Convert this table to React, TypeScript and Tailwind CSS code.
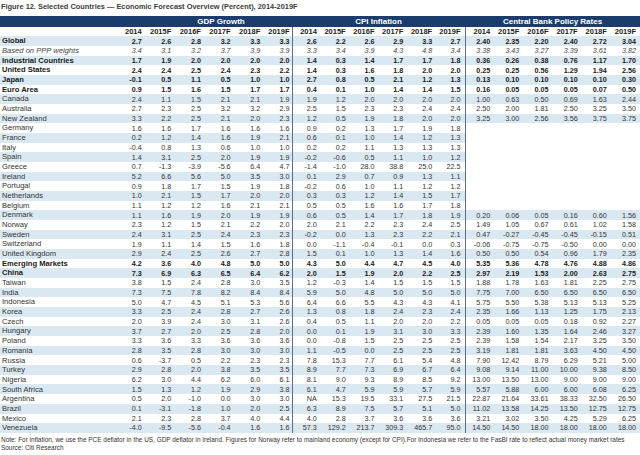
type Row = {
  name: string;
  kind?: "bold" | "italic";
  gdp: string[];
  cpi: string[];
  cb?: string[];
};

const years = ["2014", "2015F", "2016F", "2017F", "2018F", "2019F"];

const rows: Row[] = [
  { name: "Global", kind: "bold", gdp: ["2.7", "2.6", "2.8", "3.2", "3.3", "3.3"], cpi: ["2.6", "2.2", "2.6", "2.9", "3.3", "2.7"], cb: ["2.40", "2.35", "2.20", "2.40", "2.72", "3.04"] },
  { name: "Based on PPP weights", kind: "italic", gdp: ["3.4", "3.1", "3.2", "3.7", "3.9", "3.9"], cpi: ["3.3", "3.4", "3.9", "4.3", "4.8", "3.4"], cb: ["3.38", "3.43", "3.27", "3.39", "3.61", "3.82"] },
  { name: "Industrial Countries", kind: "bold", gdp: ["1.7", "1.9", "2.0", "2.0", "2.0", "2.0"], cpi: ["1.4", "0.3", "1.4", "1.7", "1.7", "1.8"], cb: ["0.36", "0.26", "0.38", "0.76", "1.17", "1.70"] },
  { name: "United States", kind: "bold", gdp: ["2.4", "2.4", "2.5", "2.4", "2.3", "2.2"], cpi: ["1.4", "0.3", "1.6", "1.8", "2.0", "2.0"], cb: ["0.25", "0.25", "0.56", "1.29", "1.94", "2.56"] },
  { name: "Japan", kind: "bold", gdp: ["-0.1", "0.5", "1.1", "0.5", "1.0", "1.0"], cpi: ["2.7", "0.8", "0.5", "2.1", "1.2", "1.3"], cb: ["0.13", "0.10", "0.10", "0.10", "0.10", "0.30"] },
  { name: "Euro Area", kind: "bold", gdp: ["0.9", "1.5", "1.6", "1.5", "1.7", "1.7"], cpi: ["0.4", "0.1", "1.0", "1.4", "1.4", "1.5"], cb: ["0.16", "0.05", "0.05", "0.05", "0.07", "0.50"] },
  { name: "Canada", gdp: ["2.4", "1.1", "1.5", "2.1", "2.1", "1.9"], cpi: ["1.9", "1.2", "2.0", "2.0", "2.0", "2.0"], cb: ["1.00", "0.63", "0.50", "0.69", "1.63", "2.44"] },
  { name: "Australia", gdp: ["2.7", "2.3", "2.5", "3.2", "3.2", "2.9"], cpi: ["2.5", "1.5", "2.3", "2.3", "2.4", "2.4"], cb: ["2.50", "2.00", "1.81", "2.50", "3.25", "3.50"] },
  { name: "New Zealand", gdp: ["3.3", "2.2", "2.5", "2.1", "2.0", "2.3"], cpi: ["1.2", "0.5", "1.9", "1.8", "2.0", "2.0"], cb: ["3.25", "3.00", "2.56", "3.56", "3.75", "3.75"] },
  { name: "Germany", gdp: ["1.6", "1.6", "1.7", "1.6", "1.6", "1.6"], cpi: ["0.9", "0.2", "1.3", "1.7", "1.9", "1.8"] },
  { name: "France", gdp: ["0.2", "1.2", "1.4", "1.6", "1.9", "2.1"], cpi: ["0.6", "0.1", "1.0", "1.4", "1.2", "1.3"] },
  { name: "Italy", gdp: ["-0.4", "0.8", "1.3", "0.6", "1.0", "1.0"], cpi: ["0.2", "0.2", "1.1", "1.3", "1.3", "1.3"] },
  { name: "Spain", gdp: ["1.4", "3.1", "2.5", "2.0", "1.9", "1.9"], cpi: ["-0.2", "-0.6", "0.5", "1.1", "1.0", "1.2"] },
  { name: "Greece", gdp: ["0.7", "-1.3", "-3.9", "-5.6", "6.4", "4.7"], cpi: ["-1.4", "-1.0", "28.0", "38.8", "25.0", "22.5"] },
  { name: "Ireland", gdp: ["5.2", "6.6", "5.6", "5.0", "3.5", "3.0"], cpi: ["0.1", "2.9", "0.7", "0.9", "1.3", "1.1"] },
  { name: "Portugal", gdp: ["0.9", "1.8", "1.7", "1.5", "1.9", "1.8"], cpi: ["-0.2", "0.6", "1.0", "1.1", "1.2", "1.2"] },
  { name: "Netherlands", gdp: ["1.0", "2.1", "1.5", "1.7", "2.0", "2.0"], cpi: ["0.3", "0.3", "1.2", "1.4", "1.5", "1.7"] },
  { name: "Belgium", gdp: ["1.1", "1.2", "1.2", "1.6", "2.1", "2.1"], cpi: ["0.5", "0.5", "1.6", "1.6", "1.7", "1.8"] },
  { name: "Denmark", gdp: ["1.1", "1.6", "1.9", "2.0", "1.9", "1.9"], cpi: ["0.6", "0.5", "1.4", "1.7", "1.8", "1.9"], cb: ["0.20", "0.06", "0.05", "0.16", "0.60", "1.56"] },
  { name: "Norway", gdp: ["2.3", "1.2", "1.5", "2.1", "2.2", "2.0"], cpi: ["2.0", "2.1", "2.2", "2.3", "2.4", "2.5"], cb: ["1.49", "1.05", "0.67", "0.61", "1.02", "1.58"] },
  { name: "Sweden", gdp: ["2.4", "3.1", "2.5", "2.4", "2.3", "2.3"], cpi: ["-0.2", "0.0", "1.3", "2.3", "2.2", "2.1"], cb: ["0.47", "-0.27", "-0.45", "-0.45", "-0.15", "0.51"] },
  { name: "Switzerland", gdp: ["1.9", "1.1", "1.4", "1.5", "1.6", "1.8"], cpi: ["0.0", "-1.1", "-0.4", "-0.1", "0.0", "0.3"], cb: ["-0.06", "-0.75", "-0.75", "-0.50", "0.00", "0.00"] },
  { name: "United Kingdom", gdp: ["2.9", "2.4", "2.5", "2.6", "2.7", "2.8"], cpi: ["1.5", "0.1", "1.0", "1.3", "1.4", "1.6"], cb: ["0.50", "0.50", "0.54", "0.96", "1.79", "2.35"] },
  { name: "Emerging Markets", kind: "bold", gdp: ["4.2", "3.6", "4.0", "4.8", "5.0", "5.0"], cpi: ["4.3", "5.0", "4.4", "4.7", "4.5", "4.0"], cb: ["5.35", "5.36", "4.78", "4.76", "4.88", "4.86"] },
  { name: "China", kind: "bold", gdp: ["7.3", "6.9", "6.3", "6.5", "6.4", "6.2"], cpi: ["2.0", "1.5", "1.9", "2.0", "2.2", "2.5"], cb: ["2.97", "2.19", "1.53", "2.00", "2.63", "2.75"] },
  { name: "Taiwan", gdp: ["3.8", "1.5", "2.4", "2.8", "3.0", "3.5"], cpi: ["1.2", "-0.3", "1.4", "1.5", "1.5", "1.5"], cb: ["1.88", "1.78", "1.63", "1.81", "2.25", "2.75"] },
  { name: "India", gdp: ["7.3", "7.5", "7.8", "8.2", "8.4", "8.4"], cpi: ["5.9", "5.0", "4.8", "5.0", "5.0", "5.0"], cb: ["7.75", "7.00", "6.50", "6.50", "6.50", "6.50"] },
  { name: "Indonesia", gdp: ["5.0", "4.7", "4.5", "5.1", "5.3", "5.6"], cpi: ["6.4", "6.6", "5.5", "4.3", "4.3", "4.1"], cb: ["5.75", "5.50", "5.38", "5.13", "5.13", "5.25"] },
  { name: "Korea", gdp: ["3.3", "2.5", "2.4", "2.8", "2.7", "2.6"], cpi: ["1.3", "0.8", "1.8", "2.4", "2.3", "2.4"], cb: ["2.35", "1.66", "1.13", "1.25", "1.75", "2.13"] },
  { name: "Czech", gdp: ["2.0", "3.9", "2.4", "3.0", "3.1", "2.6"], cpi: ["0.4", "0.5", "1.1", "2.0", "2.0", "2.2"], cb: ["0.05", "0.05", "0.05", "0.18", "0.92", "2.27"] },
  { name: "Hungary", gdp: ["3.7", "2.7", "2.0", "2.5", "2.8", "2.0"], cpi: ["0.0", "0.1", "1.9", "3.1", "3.0", "3.3"], cb: ["2.39", "1.60", "1.35", "1.64", "2.46", "3.27"] },
  { name: "Poland", gdp: ["3.3", "3.6", "3.3", "3.6", "3.6", "3.6"], cpi: ["0.0", "-0.8", "1.5", "2.5", "2.5", "2.5"], cb: ["2.39", "1.58", "1.54", "2.17", "3.25", "3.50"] },
  { name: "Romania", gdp: ["2.8", "3.5", "2.8", "3.0", "3.0", "3.0"], cpi: ["1.1", "-0.5", "0.0", "2.5", "2.5", "2.5"], cb: ["3.19", "1.81", "1.81", "3.63", "4.50", "4.50"] },
  { name: "Russia", gdp: ["0.6", "-3.7", "0.5", "2.2", "2.3", "2.3"], cpi: ["7.8", "15.3", "7.7", "6.1", "5.4", "4.8"], cb: ["7.90", "12.42", "8.79", "6.29", "5.21", "5.00"] },
  { name: "Turkey", gdp: ["2.9", "2.8", "2.0", "3.8", "3.5", "3.5"], cpi: ["8.9", "7.7", "7.3", "6.9", "6.7", "6.4"], cb: ["9.08", "9.14", "11.00", "10.00", "9.38", "8.50"] },
  { name: "Nigeria", gdp: ["6.2", "3.0", "4.4", "6.2", "6.0", "6.1"], cpi: ["8.1", "9.0", "9.3", "8.9", "8.5", "9.2"], cb: ["13.00", "13.50", "13.00", "9.00", "9.00", "9.00"] },
  { name: "South Africa", gdp: ["1.5", "1.3", "1.2", "1.9", "2.9", "3.8"], cpi: ["6.1", "4.7", "5.9", "5.9", "5.7", "5.9"], cb: ["5.57", "5.88", "6.00", "6.00", "6.08", "6.25"] },
  { name: "Argentina", gdp: ["0.5", "2.0", "-1.0", "0.0", "3.0", "3.0"], cpi: ["NA", "15.3", "19.5", "33.1", "27.5", "21.5"], cb: ["22.87", "21.64", "33.61", "38.33", "32.50", "26.50"] },
  { name: "Brazil", gdp: ["0.1", "-3.1", "-1.8", "1.0", "2.0", "2.5"], cpi: ["6.3", "8.9", "7.5", "5.7", "5.1", "5.0"], cb: ["11.02", "13.58", "14.25", "13.50", "12.75", "12.75"] },
  { name: "Mexico", gdp: ["2.1", "2.3", "2.8", "3.7", "4.0", "4.4"], cpi: ["4.0", "2.8", "3.7", "3.6", "3.6", "3.6"], cb: ["3.21", "3.02", "3.50", "4.25", "5.29", "6.25"] },
  { name: "Venezuela", gdp: ["-4.0", "-9.5", "-5.6", "-0.4", "1.6", "1.6"], cpi: ["57.3", "129.2", "213.7", "309.3", "465.7", "95.0"], cb: ["14.50", "14.50", "18.00", "18.00", "18.00", "18.00"] },
];

const narrow = { fontFamily: '"Liberation Sans Narrow", "Liberation Sans", Arial, sans-serif' };
const wide = { fontFamily: '"Liberation Sans", Arial, sans-serif' };

const sep = "border-l-[1.5px] border-[#5d6d82]";

export default function App() {
  return (
    <div className="w-[640px] h-[455px] bg-white text-[#231f20] overflow-hidden" style={narrow}>
      <div className="h-[16px] pl-[1px] pt-[2px] text-[7.4px] font-bold leading-[10px] text-[#3d3d3d] whitespace-nowrap" style={wide}>
        Figure 12. Selected Countries — Economic Forecast Overview (Percent), 2014-2019F
      </div>
      <table className="table-fixed border-collapse w-[640px] text-[7.2px] leading-none" style={wide}>
        <colgroup>
          <col className="w-[114px]" />
          {years.map((y) => <col key={"g" + y} className="w-[29.67px]" />)}
          {years.map((y) => <col key={"c" + y} className="w-[28.83px]" />)}
          {years.map((y) => <col key={"b" + y} className="w-[29.17px]" />)}
        </colgroup>
        <thead style={narrow}>
          <tr className="h-[11px] bg-[#1d3c6e] text-white text-[8px]">
            <th className="p-0" />
            <th colSpan={6} className="p-0 pl-[36px] font-bold text-center">GDP Growth</th>
            <th colSpan={6} className="p-0 font-bold text-center">CPI Inflation</th>
            <th colSpan={6} className="p-0 font-bold text-center">Central Bank Policy Rates</th>
          </tr>
          <tr className="h-[9.3px] font-bold text-[7.5px]">
            <th className="p-0" />
            {years.map((y) => <th key={"hg" + y} className="p-0 pr-[2px] text-right">{y}</th>)}
            {years.map((y, i) => (
              <th key={"hc" + y} className={`p-0 pr-[4px] text-right ${i === 0 ? sep : ""}`}>{y}</th>
            ))}
            {years.map((y, i) => (
              <th key={"hb" + y} className={`p-0 pr-[4px] text-right ${i === 0 ? sep : ""}`}>{y}</th>
            ))}
          </tr>
        </thead>
        <tbody>
          {rows.map((r, idx) => {
            const stripe = idx % 2 === 0 ? "bg-[#dae8f2]" : "bg-white";
            const weight = r.kind === "bold" ? "font-bold text-[#1a1a1a]" : r.kind === "italic" ? "italic text-[#444]" : "text-[#333]";
            return (
              <tr key={r.name} className={`h-[9.68px] ${weight}`}>
                <td className={`p-0 pl-[2px] text-left text-[7.6px] ${stripe}`} style={narrow}>{r.name}</td>
                {r.gdp.map((v, i) => <td key={"g" + i} className={`p-0 pr-[2px] text-right ${stripe}`}>{v}</td>)}
                {r.cpi.map((v, i) => (
                  <td key={"c" + i} className={`p-0 pr-[4px] text-right ${stripe} ${i === 0 ? sep : ""}`}>{v}</td>
                ))}
                {r.cb
                  ? r.cb.map((v, i) => (
                      <td key={"b" + i} className={`p-0 pr-[4px] text-right ${stripe} ${i === 0 ? sep : ""}`}>{v}</td>
                    ))
                  : years.map((y, i) => (
                      <td key={"b" + y} className={`p-0 bg-white ${i === 0 ? sep : ""}`} />
                    ))}
              </tr>
            );
          })}
        </tbody>
      </table>
      <div className="pl-[1px] pt-[3px] text-[6.45px] leading-[8px] text-[#333]">
        <div className="whitespace-nowrap">
          Note: For inflation, we use the PCE deflator in the US, GDP deflator in Ireland. Figures for Norway refer to mainland economy (except for CPI).For Indonesia we refer to the FasBI rate to reflect actual money market rates
        </div>
        <div>Source: Citi Research</div>
      </div>
    </div>
  );
}
